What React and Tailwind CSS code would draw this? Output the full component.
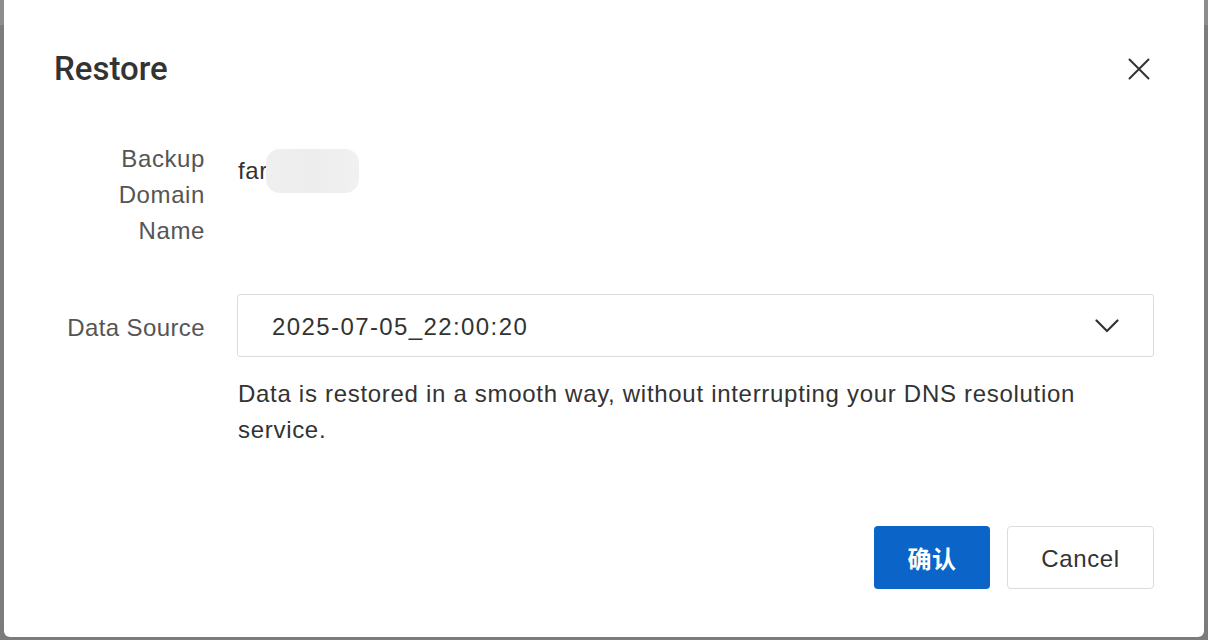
import React from "react";

export default function App() {
  return (
    <div
      className="w-[1208px] h-[640px] overflow-hidden flex px-[4px] pb-[3px] bg-[linear-gradient(to_bottom,#8d8d8d_25px,#7c7c7c_25px)]"
      style={{ fontFamily: '"Liberation Sans", Arial, "Noto Sans CJK SC", sans-serif' }}
    >
      <div className="flex-1 bg-white rounded-b-[6px] flex flex-col px-[50px] tracking-[0.6px]">
        {/* header */}
        <div className="flex items-center justify-between pt-[49px] h-[89px]">
          <h1
            className="text-[33px] leading-[40px] font-medium text-[#333333] tracking-normal"
            style={{ fontFamily: 'Roboto, "Liberation Sans", sans-serif' }}
          >
            Restore
          </h1>
          <button className="w-[22px] h-[22px] flex items-center justify-center mr-[4px] text-[#333333]">
            <svg width="22" height="22" viewBox="0 0 22 22" fill="none">
              <path d="M1.5 1.5 L20.5 20.5 M20.5 1.5 L1.5 20.5" stroke="currentColor" strokeWidth="2" strokeLinecap="round" />
            </svg>
          </button>
        </div>

        {/* row 1 */}
        <div className="flex mt-[52px] gap-[32px]">
          <div className="w-[151px] text-right text-[24px] leading-[36px] text-[#555555]">
            Backup
            <br />
            Domain
            <br />
            Name
          </div>
          <div className="pt-[8px] flex items-center h-[52px] text-[24px] text-[#333333]">
            <span className="pl-[1px]">far</span>
            <span className="inline-block -ml-[2px] w-[93px] h-[44px] rounded-[14px] bg-[linear-gradient(to_right,#efefef_0%,#ededed_50%,#f1f1f1_100%)]" />
          </div>
        </div>

        {/* row 2 */}
        <div className="flex mt-[45px] gap-[32px]">
          <div className="w-[151px] text-right text-[24px] leading-[63px] pt-[2px] text-[#555555] tracking-[0.4px]">Data Source</div>
          <div className="flex-1 flex flex-col">
            <div className="h-[63px] border border-[#dcdcdc] rounded-[3px] flex items-center justify-between pl-[34px] pr-[34px]">
              <span className="text-[24px] text-[#333333] pt-[2px] tracking-[1.4px]">2025-07-05_22:00:20</span>
              <svg width="24" height="14" viewBox="0 0 24 14" fill="none" className="text-[#333333]">
                <path d="M1.5 1.5 L12 12 L22.5 1.5" stroke="currentColor" strokeWidth="2.2" strokeLinecap="round" strokeLinejoin="round" />
              </svg>
            </div>
            <p className="mt-[19px] text-[24px] leading-[36px] text-[#333333] pl-[1px] tracking-[0.7px]">
              Data is restored in a smooth way, without interrupting your DNS resolution
              <br />
              service.
            </p>
          </div>
        </div>

        {/* footer */}
        <div className="flex justify-end gap-[17px] mt-[78px]">
          <button
            className="w-[116px] h-[63px] rounded-[4px] bg-[#0b65c8] text-white text-[24px] font-bold"
            style={{ fontFamily: '"Noto Sans CJK SC", sans-serif' }}
          >
            确认
          </button>
          <button className="w-[147px] h-[63px] rounded-[4px] border border-[#dcdcdc] bg-white text-[#333333] text-[24px] pt-[2px]">
            Cancel
          </button>
        </div>
      </div>
    </div>
  );
}
